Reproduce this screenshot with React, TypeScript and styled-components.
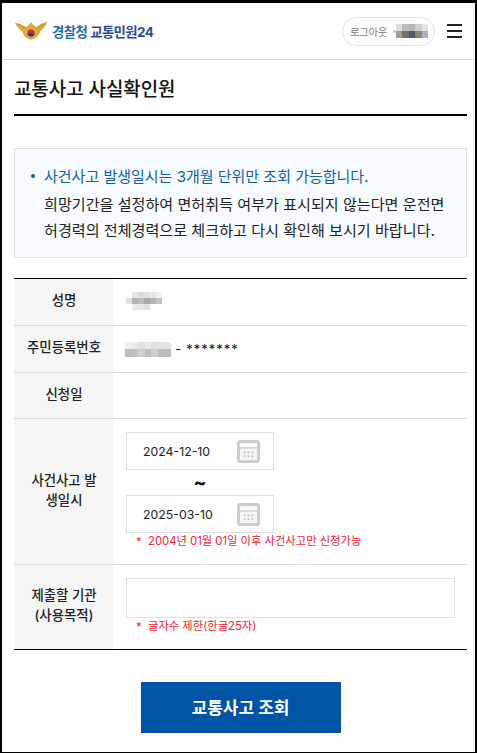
import styled, { createGlobalStyle } from 'styled-components';

const GlobalStyle = createGlobalStyle`
  * { box-sizing: border-box; }
  html, body { margin: 0; padding: 0; background: #000; }
  body {
    font-family: Inter, "Noto Sans CJK KR", "Noto Sans", sans-serif;
    color: #111;
  }
`;

const nameBlur = [
  ['#fff', '#e6e6e6', '#dcdcdc', '#e0e0e0', '#e6e6e6', '#f2f2f2'],
  ['#e4e4e4', '#b4b4b4', '#bcbcbc', '#a8a8a8', '#b4b4b4', '#c4c4c4'],
  ['#fff', '#e8e8e8', '#e6e6e6', '#e2e2e2', '#fff', '#fff'],
];
const ssnBlur = [
  ['#f0f0f0', '#ebebeb', '#e0e0e0', '#e8e8e8', '#e2e2e2', '#e2e2e2', '#e4e4e4'],
  ['#bdbdbd', '#c0c0c0', '#cfcfcf', '#bfbfbf', '#cdcdcd', '#bcbcbc', '#bcbcbc'],
];
const userBlur = [
  ['#e2dfdb', '#bcbcbc', '#b5b8bb', '#d0cfca', '#e4e4e2'],
  ['#a69c91', '#76736d', '#545a64', '#8d8779', '#a7b2c4'],
];

function Mosaic({ rows, cell, rowHeight }: { rows: string[][]; cell: number; rowHeight?: number }) {
  return (
    <MosaicGrid $cols={rows[0].length} $cell={cell} $rowHeight={rowHeight ?? cell} aria-hidden>
      {rows.flat().map((color, i) => (
        <i key={i} style={{ background: color }} />
      ))}
    </MosaicGrid>
  );
}

function CalendarIcon() {
  return (
    <svg width="23" height="23" viewBox="0 0 24 24">
      <rect x="1.5" y="1.5" width="21" height="21" rx="2" fill="#f7f7f7" stroke="#cbcbcb" strokeWidth="3" />
      <rect x="3" y="6" width="18" height="1.4" fill="#fff" />
      <rect x="3" y="7.4" width="18" height="1.6" fill="#cfcfcf" />
      <g fill="#c6c6c6">
        <rect x="7" y="12" width="2" height="2" />
        <rect x="11" y="12" width="2" height="2" />
        <rect x="15" y="12" width="2" height="2" />
        <rect x="7" y="16" width="2" height="2" />
        <rect x="11" y="16" width="2" height="2" />
        <rect x="15" y="16" width="2" height="2" />
      </g>
    </svg>
  );
}

function PoliceLogo() {
  return (
    <svg width="33" height="20" viewBox="0 0 34 20">
      <path d="M0 1.5 C4 2 8 3.5 11.5 6 L13 4.5 L15 3 L16.5 0.5 L18 3 L20 4.5 L22 6 C25 3.5 29 1.5 33.5 0.5 C32 4 29.5 8 26 10 C25 14 22 18 16.5 19 C11.5 18 8.5 14.5 7.5 10.5 C4.5 8.5 1.5 5 0 1.5 Z" fill="#dcab3a" />
      <path d="M3 3 C6 4 9 6 11 8 M30.5 2.5 C28 4 25 6 23 8" stroke="#b98a24" strokeWidth="0.8" fill="none" />
      <circle cx="16.5" cy="12" r="3.6" fill="#c8323c" />
      <path d="M12.9 12 C14 13.4 15.4 11.6 16.5 12.4 C17.8 13.3 19 12.6 20.1 12 A3.6 3.6 0 0 1 12.9 12 Z" fill="#24408e" />
    </svg>
  );
}

export default function App() {
  return (
    <>
      <GlobalStyle />
      <Frame>
        <Header>
          <Brand>
            <PoliceLogo />
            <BrandText>
              <BrandAgency>경찰청</BrandAgency>
              <BrandService>교통민원24</BrandService>
            </BrandText>
          </Brand>
          <HeaderRight>
            <LogoutPill>
              <span>로그아웃</span>
              <UserDot />
              <Mosaic rows={userBlur} cell={6.4} rowHeight={7} />
            </LogoutPill>
            <MenuButton aria-label="메뉴">
              <span />
              <span />
              <span />
            </MenuButton>
          </HeaderRight>
        </Header>

        <Content>
          <PageTitle>교통사고 사실확인원</PageTitle>

          <Notice>
            <NoticeHead>사건사고 발생일시는 3개월 단위만 조회 가능합니다.</NoticeHead>
            <NoticeBody>
              희망기간을 설정하여 면허취득 여부가 표시되지 않는다면 운전면
              <br />
              허경력의 전체경력으로 체크하고 다시 확인해 보시기 바랍니다.
            </NoticeBody>
          </Notice>

          <FormTable>
            <Row $height={47}>
              <Label>성명</Label>
              <Value>
                <Mosaic rows={nameBlur} cell={6} />
              </Value>
            </Row>
            <Row $height={47}>
              <Label>주민등록번호</Label>
              <Value>
                <SsnLine>
                  <Mosaic rows={ssnBlur} cell={6.6} rowHeight={7.5} />
                  <span>-</span>
                  <Stars>*******</Stars>
                </SsnLine>
              </Value>
            </Row>
            <Row $height={46}>
              <Label>신청일</Label>
              <Value />
            </Row>
            <Row $height={146}>
              <Label>
                사건사고 발<br />생일시
              </Label>
              <Value>
                <DateField>
                  <span>2024-12-10</span>
                  <CalendarIcon />
                </DateField>
                <Tilde>~</Tilde>
                <DateField>
                  <span>2025-03-10</span>
                  <CalendarIcon />
                </DateField>
                <Hint>2004년 01월 01일 이후 사건사고만 신청가능</Hint>
              </Value>
            </Row>
            <Row $height={84} $last>
              <Label>
                제출할 기관
                <br />
                (사용목적)
              </Label>
              <Value>
                <PurposeInput />
                <Hint>글자수 제한(한글25자)</Hint>
              </Value>
            </Row>
          </FormTable>

          <Actions>
            <SubmitButton>교통사고 조회</SubmitButton>
          </Actions>
        </Content>
      </Frame>
    </>
  );
}

const Frame = styled.div`
  width: 473px;
  height: 749px;
  margin: 3px 2px 1px;
  background: #fff;
  overflow: hidden;
`;

const Header = styled.header`
  height: 57px;
  display: flex;
  align-items: center;
  justify-content: space-between;
  padding: 0 13px 0 13px;
  border-bottom: 1px solid #d9d9d9;
`;

const Brand = styled.div`
  display: flex;
  align-items: center;
  gap: 4px;
`;

const BrandText = styled.div`
  display: flex;
  gap: 3px;
  font-size: 13.4px;
  font-weight: 700;
  letter-spacing: -0.6px;
`;

const BrandAgency = styled.span`
  color: #1f6fa8;
`;

const BrandService = styled.span`
  color: #2b4a9b;
`;

const HeaderRight = styled.div`
  display: flex;
  align-items: center;
  gap: 12px;
`;

const LogoutPill = styled.div`
  width: 93px;
  height: 29px;
  border: 1px solid #dfe3ee;
  border-radius: 15px;
  display: flex;
  align-items: center;
  padding-left: 7px;
  font-size: 10.5px;
  letter-spacing: -0.4px;
  white-space: nowrap;
  color: #808080;
`;

const UserDot = styled.i`
  width: 3px;
  height: 3px;
  margin-left: 6px;
  border-radius: 50%;
  background: #c4c8d4;
`;

const MosaicGrid = styled.div<{ $cols: number; $cell: number; $rowHeight: number }>`
  display: grid;
  flex: none;
  grid-template-columns: repeat(${(p) => p.$cols}, ${(p) => p.$cell}px);
  grid-auto-rows: ${(p) => p.$rowHeight}px;
`;

const MenuButton = styled.button`
  width: 15px;
  height: 14px;
  padding: 0;
  border: none;
  background: none;
  display: flex;
  flex-direction: column;
  justify-content: space-between;

  span {
    display: block;
    height: 2px;
    background: #222;
  }
`;

const Content = styled.main`
  padding: 0 8px 0 12px;
`;

const PageTitle = styled.h1`
  margin: 0;
  height: 56px;
  display: flex;
  align-items: center;
  font-size: 18.9px;
  font-weight: 500;
  color: #111;
  border-bottom: 2px solid #000;
`;

const Notice = styled.section`
  margin-top: 32px;
  height: 110px;
  padding: 15px 10px 0 29px;
  background: #f8fbff;
  border: 1px solid #e2e2e2;
`;

const NoticeHead = styled.p`
  position: relative;
  margin: 0 0 2px;
  font-size: 15px;
  line-height: 26px;
  color: #0f5fa8;

  &::before {
    content: '';
    position: absolute;
    left: -13px;
    top: 10px;
    width: 4px;
    height: 4px;
    border-radius: 50%;
    background: #0f5fa8;
  }
`;

const NoticeBody = styled.p`
  margin: 0;
  font-size: 15.1px;
  line-height: 25.5px;
  color: #222;
  white-space: nowrap;
`;

const FormTable = styled.div`
  margin-top: 20px;
  border-top: 1px solid #000;
  border-bottom: 1px solid #000;
`;

const Row = styled.div<{ $height: number; $last?: boolean }>`
  display: grid;
  grid-template-columns: 100px 1fr;
  height: ${(p) => p.$height}px;
  border-bottom: ${(p) => (p.$last ? 'none' : '1px solid #dcdcdc')};
`;

const Label = styled.div`
  background: #f6f6f6;
  display: flex;
  align-items: center;
  justify-content: center;
  text-align: center;
  padding-bottom: 4px;
  font-size: 13.4px;
  line-height: 20px;
  font-weight: 500;
  color: #222;
`;

const Value = styled.div`
  padding: 0 12px 2px;
  display: flex;
  flex-direction: column;
  justify-content: center;
  font-size: 13px;
`;

const SsnLine = styled.div`
  display: flex;
  align-items: center;
  gap: 4px;
  margin-top: 2px;
  margin-left: -1px;
`;

const Stars = styled.span`
  margin-left: 1px;
  letter-spacing: 1px;
`;

const DateField = styled.div`
  width: 148px;
  height: 38px;
  flex: none;
  border: 1px solid #e0e0e0;
  display: flex;
  align-items: center;
  justify-content: space-between;
  padding: 2px 13px 0 16px;
  font-size: 12.3px;
  color: #222;
`;

const Tilde = styled.div`
  width: 148px;
  height: 25px;
  text-align: center;
  font-size: 19px;
  font-weight: 700;
  line-height: 25px;
`;

const Hint = styled.div`
  position: relative;
  padding-left: 22px;
  font-size: 11.3px;
  line-height: 17px;
  color: #f5222d;

  &::before {
    content: '*';
    position: absolute;
    left: 10px;
    top: 1px;
  }
`;

const PurposeInput = styled.div`
  height: 40px;
  flex: none;
  border: 1px solid #e0e0e0;
`;

const Actions = styled.div`
  display: flex;
  justify-content: center;
  margin-top: 32px;
`;

const SubmitButton = styled.button`
  width: 200px;
  height: 51px;
  padding: 0 0 2px;
  border: none;
  background: #0054a6;
  color: #fff;
  font-family: inherit;
  font-size: 17px;
  font-weight: 700;
`;
